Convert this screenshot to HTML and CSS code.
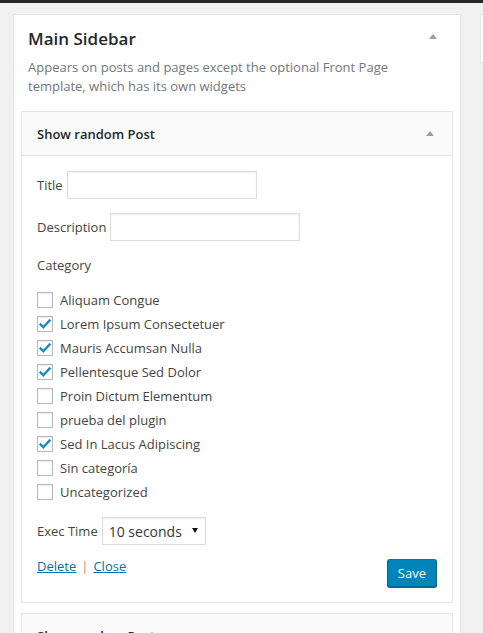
FILE: index.html
```html
<!DOCTYPE html>
<html lang="en">
<head>
<meta charset="utf-8">
<title>Widgets</title>
<link rel="stylesheet" href="styles.css">
</head>
<body>
<div class="topbar"></div>
<div class="page">
  <div class="sidebar">
    <div class="sidebar-head">
      <h2 class="sidebar-title">Main Sidebar</h2>
      <span class="arrow-up"></span>
    </div>
    <p class="sidebar-desc">Appears on posts and pages except the optional Front Page template, which has its own widgets</p>

    <div class="widget">
      <div class="widget-top">
        <h3 class="widget-title">Show random Post</h3>
        <span class="arrow-up"></span>
      </div>
      <div class="widget-inside">
        <div class="field">
          <label class="field-label">Title</label>
          <input class="text-input" type="text">
        </div>
        <div class="field">
          <label class="field-label">Description</label>
          <input class="text-input" type="text">
        </div>
        <p class="category-label">Category</p>
        <ul class="cat-list">
          <li class="cat-item"><span class="checkbox"></span>Aliquam Congue</li>
          <li class="cat-item"><span class="checkbox"><svg viewBox="0 0 16 16" width="16" height="16"><polyline points="2.8,7.6 6.3,11.2 13.4,3.6" fill="none" stroke="#1e8cbe" stroke-width="2.4"/></svg></span>Lorem Ipsum Consectetuer</li>
          <li class="cat-item"><span class="checkbox"><svg viewBox="0 0 16 16" width="16" height="16"><polyline points="2.8,7.6 6.3,11.2 13.4,3.6" fill="none" stroke="#1e8cbe" stroke-width="2.4"/></svg></span>Mauris Accumsan Nulla</li>
          <li class="cat-item"><span class="checkbox"><svg viewBox="0 0 16 16" width="16" height="16"><polyline points="2.8,7.6 6.3,11.2 13.4,3.6" fill="none" stroke="#1e8cbe" stroke-width="2.4"/></svg></span>Pellentesque Sed Dolor</li>
          <li class="cat-item"><span class="checkbox"></span>Proin Dictum Elementum</li>
          <li class="cat-item"><span class="checkbox"></span>prueba del plugin</li>
          <li class="cat-item"><span class="checkbox"><svg viewBox="0 0 16 16" width="16" height="16"><polyline points="2.8,7.6 6.3,11.2 13.4,3.6" fill="none" stroke="#1e8cbe" stroke-width="2.4"/></svg></span>Sed In Lacus Adipiscing</li>
          <li class="cat-item"><span class="checkbox"></span>Sin categoría</li>
          <li class="cat-item"><span class="checkbox"></span>Uncategorized</li>
        </ul>
        <div class="field">
          <label class="field-label">Exec Time</label>
          <span class="select-wrap">
            <select class="select">
              <option>10 seconds</option>
            </select>
            <svg class="select-arrow" viewBox="0 0 6 5" width="6" height="5"><polygon points="0,0 6,0 3,5" fill="#111"/></svg>
          </span>
        </div>
        <div class="actions">
          <div class="links"><a href="#" class="link">Delete</a><span class="sep">|</span><a href="#" class="link">Close</a></div>
          <button class="save-btn" type="button">Save</button>
        </div>
      </div>
    </div>

    <div class="widget next-widget">
      <div class="widget-top">
        <h3 class="widget-title">Show random Post</h3>
      </div>
    </div>
  </div>
  <div class="side-panel"></div>
</div>
</body>
</html>
```
FILE: styles.css
```css
html, body {
  margin: 0;
  padding: 0;
  height: 100%;
  overflow: hidden;
}
body {
  background: #f1f1f1;
  font-family: "Open Sans", "Noto Sans", sans-serif;
  font-size: 13px;
  color: #444;
}
.topbar {
  height: 3px;
  background: #262626;
}
.page {
  display: flex;
  align-items: flex-start;
  padding: 11px 0 0 13px;
  height: calc(100% - 14px);
}
.sidebar {
  width: 448px;
  box-sizing: border-box;
  height: 100%;
  background: #fff;
  border: 1px solid #e5e5e5;
  border-bottom: none;
  flex-shrink: 0;
}
.side-panel {
  margin-left: 19px;
  width: 30px;
  height: 49px;
  box-sizing: border-box;
  background: #fff;
  border: 1px solid #e5e5e5;
  flex-shrink: 0;
}
.sidebar-head {
  display: flex;
  justify-content: space-between;
  align-items: flex-start;
  padding: 12px 23px 0 14px;
}
.sidebar-title {
  margin: 0;
  font-size: 17px;
  line-height: 24px;
  font-weight: 600;
  color: #23282d;
}
.arrow-up {
  width: 0;
  height: 0;
  border-left: 4px solid transparent;
  border-right: 4px solid transparent;
  border-bottom: 5px solid #9a9fa4;
  margin-top: 7px;
}
.sidebar-desc {
  margin: 7px 14px 0;
  padding-right: 20px;
  font-size: 13px;
  line-height: 19px;
  color: #72777c;
}
.widget {
  margin: 15px 7px 0;
  border: 1px solid #e5e5e5;
  background: #fff;
}
.widget-top {
  height: 43px;
  display: flex;
  align-items: center;
  justify-content: space-between;
  padding: 0 18px 0 15px;
  background: #fafafa;
}
.widget-top .arrow-up {
  margin-top: 0;
}
.widget-title {
  margin: 0;
  font-size: 13px;
  font-weight: 600;
  color: #23282d;
}
.widget-inside {
  border-top: 1px solid #e5e5e5;
  padding: 15px 15px 15px;
}
.field {
  display: flex;
  align-items: center;
  height: 28px;
  margin-bottom: 14px;
}
.field-label {
  margin-right: 4px;
  color: #444;
}
.text-input {
  width: 190px;
  height: 28px;
  box-sizing: border-box;
  border: 1px solid #ddd;
  box-shadow: inset 0 1px 2px rgba(0,0,0,.07);
  margin: 0;
  padding: 3px 5px;
  font: inherit;
  outline: none;
}
.category-label {
  margin: 0 0 13px;
  line-height: 20px;
}
.cat-list {
  list-style: none;
  margin: 0 0 13px;
  padding: 0;
}
.cat-item {
  display: flex;
  align-items: center;
  height: 24px;
}
.checkbox {
  width: 16px;
  height: 16px;
  box-sizing: border-box;
  border: 1px solid #b4b9be;
  background: #fff;
  box-shadow: inset 0 1px 2px rgba(0,0,0,.1);
  margin-right: 7px;
  position: relative;
  flex-shrink: 0;
}
.checkbox svg {
  position: absolute;
  left: -1px;
  top: -1px;
}
.select-wrap {
  position: relative;
  display: inline-block;
  width: 104px;
  height: 28px;
}
.select {
  appearance: none;
  -webkit-appearance: none;
  width: 100%;
  height: 100%;
  box-sizing: border-box;
  border: 1px solid #ddd;
  border-radius: 0;
  box-shadow: inset 0 1px 2px rgba(0,0,0,.07);
  background: #fff;
  padding: 0 6px;
  font-family: "Open Sans", sans-serif;
  font-size: 14px;
  color: #32373c;
  margin: 0;
  outline: none;
}
.select-arrow {
  position: absolute;
  right: 8px;
  top: 11px;
}
.actions {
  display: flex;
  justify-content: space-between;
  align-items: flex-start;
  height: 28px;
}
.links {
  line-height: 14px;
}
.link {
  color: #0073aa;
  text-decoration: underline;
}
.sep {
  color: #b5865f;
  margin: 0 5px;
}
.save-btn {
  height: 28px;
  padding: 0 10px;
  background: #0085ba;
  border: 1px solid #0073aa;
  border-color: #0073aa #006799 #006799;
  border-radius: 3px;
  box-shadow: 0 1px 0 #006799;
  color: #fff;
  font-family: "Open Sans", sans-serif;
  font-size: 13px;
  line-height: 26px;
  cursor: pointer;
}
.next-widget {
  margin-top: 10px;
}
```
